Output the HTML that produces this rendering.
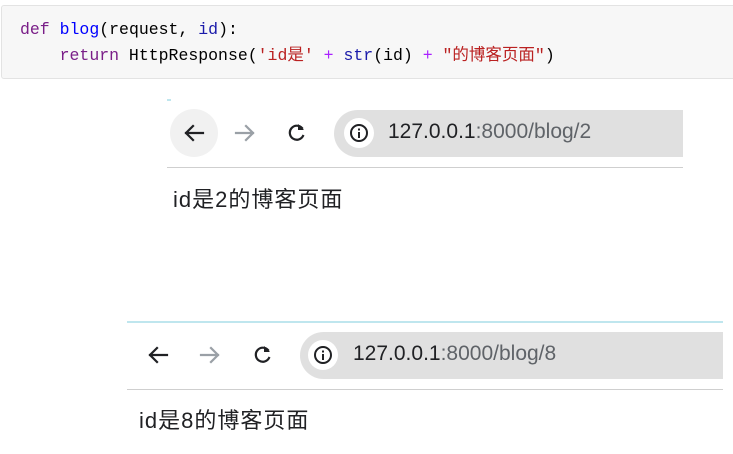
<!DOCTYPE html>
<html><head><meta charset="utf-8"><style>
body{margin:0;width:733px;height:454px;background:#fff;position:relative;overflow:hidden;font-family:"Liberation Sans","Noto Sans CJK SC",sans-serif}
.code{position:absolute;left:1px;top:5px;width:740px;height:72px;background:#f7f7f7;border:1px solid #e3e3e3;border-radius:3px}
.code pre{margin:0;position:absolute;left:18px;top:11px;font:16.5px/26px "Liberation Mono","Noto Sans CJK SC",monospace;color:#000}
.k{color:#7a1e88}.f{color:#0000ff}.s{color:#ba2121}.p{color:#aa22ff}.b{color:#1a1aaa}
.abs{position:absolute}
.bar{position:absolute;background:#e0e0e0;height:47px;border-radius:24px 0 0 24px}
.url{position:absolute;font-size:21px;color:#202124}
.url span{color:#5f6368}
.info{position:absolute;width:30px;height:30px;border-radius:50%;background:#fff}
.pg{position:absolute;font-size:22px;letter-spacing:1px;color:#202124}
.hl{position:absolute;height:1px;background:#cfcfcf}
</style></head><body>
<div class="code"><pre><span class="k">def</span> <span class="f">blog</span>(request, <span class="b">id</span>):
    <span class="k">return</span> HttpResponse(<span class="s">'id是'</span> <span class="p">+</span> <span class="b">str</span>(id) <span class="p">+</span> <span class="s">"的博客页面"</span>)</pre></div>

<div class="abs" style="left:167px;top:99px;width:4px;height:2px;background:#bfe6ee"></div>
<div class="abs" style="left:170px;top:109px;width:48px;height:48px;border-radius:50%;background:#f1f1f1"></div>
<svg class="abs" style="left:0;top:0" width="733" height="454">
<g fill="none" stroke-width="2.2" stroke-linecap="square">
<path d="M203 133H186M193 126L186 133L193 140" stroke="#202124"/>
<path d="M236 133H253M246 126L253 133L246 140" stroke="#9aa0a6"/>
<path d="M302 128A7 7 0 1 0 303 136" stroke="#202124"/>
<path d="M167 355H150M157 348L150 355L157 362" stroke="#202124"/>
<path d="M201 355H218M211 348L218 355L211 362" stroke="#9aa0a6"/>
<path d="M268 350A7 7 0 1 0 269 358" stroke="#202124"/>
</g>
<path d="M298 124V130H304Z" fill="#202124"/>
<path d="M264 346V352H270Z" fill="#202124"/>
</svg>
<div class="bar" style="left:334px;top:110px;width:349px"></div>
<div class="info" style="left:344px;top:118px"></div>
<svg class="abs" style="left:349px;top:123px" width="20" height="20"><circle cx="10" cy="10" r="8" fill="none" stroke="#202124" stroke-width="2"/><rect x="9" y="9" width="2" height="6" fill="#202124"/><rect x="9" y="5.5" width="2" height="2" fill="#202124"/></svg>
<div class="url" style="left:388px;top:120px">127.0.0.1<span>:8000/blog/2</span></div>
<div class="hl" style="left:167px;top:167px;width:516px"></div>
<div class="pg" style="left:173px;top:182px">id是2的博客页面</div>

<div class="abs" style="left:127px;top:321px;width:596px;height:2px;background:#bfe6ee"></div>
<div class="bar" style="left:300px;top:332px;width:423px"></div>
<div class="info" style="left:308px;top:340px"></div>
<svg class="abs" style="left:313px;top:345px" width="20" height="20"><circle cx="10" cy="10" r="8" fill="none" stroke="#202124" stroke-width="2"/><rect x="9" y="9" width="2" height="6" fill="#202124"/><rect x="9" y="5.5" width="2" height="2" fill="#202124"/></svg>
<div class="url" style="left:353px;top:342px">127.0.0.1<span>:8000/blog/8</span></div>
<div class="hl" style="left:127px;top:389px;width:596px"></div>
<div class="pg" style="left:139px;top:403px">id是8的博客页面</div>
</body></html>
